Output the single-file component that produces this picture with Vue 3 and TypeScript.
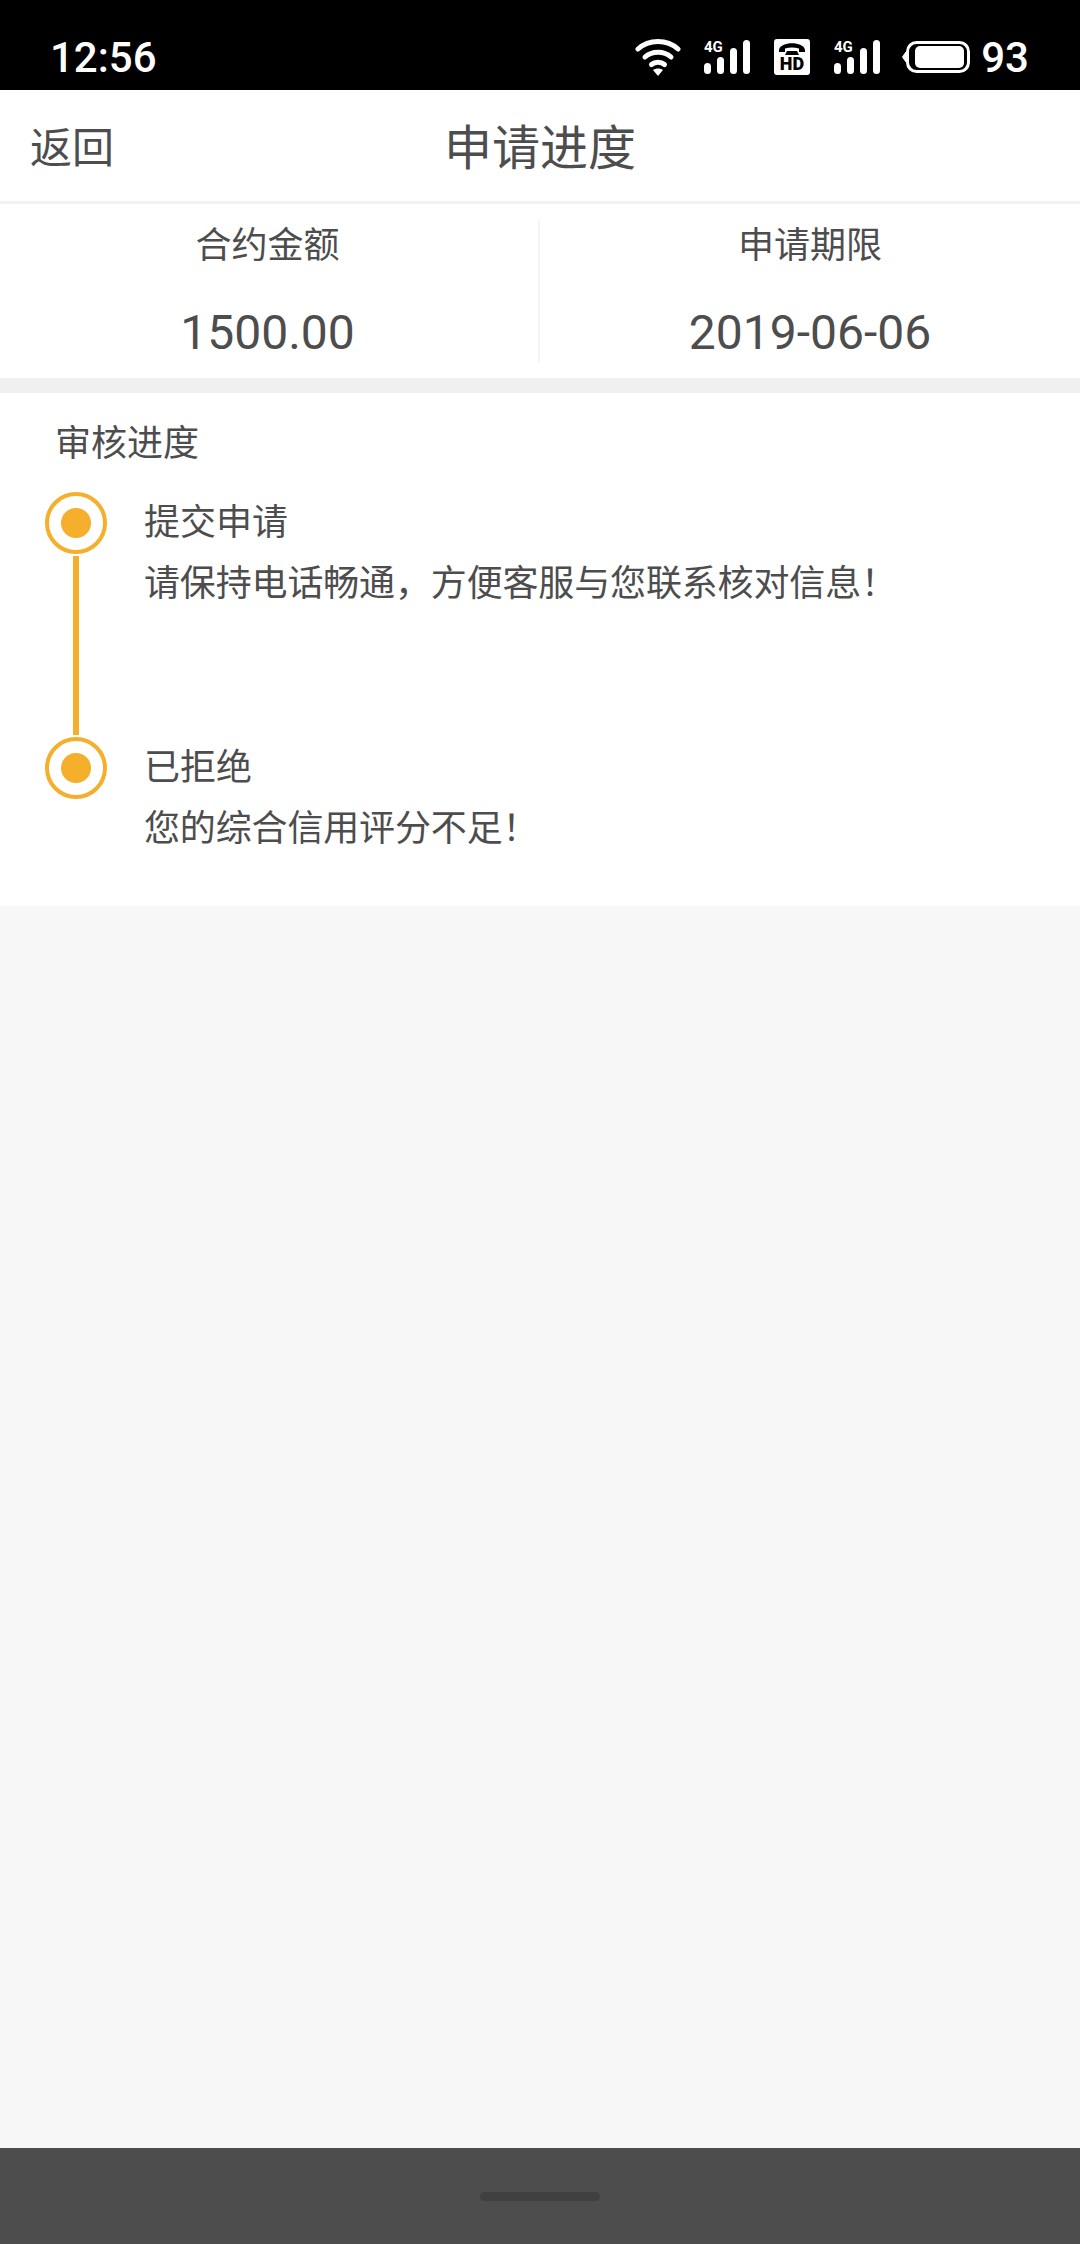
<script setup lang="ts">
interface Step {
  title: string
  desc: string
}

const steps: Step[] = [
  { title: '提交申请', desc: '请保持电话畅通，方便客服与您联系核对信息！' },
  { title: '已拒绝', desc: '您的综合信用评分不足！' }
]
</script>

<template>
  <div class="page">
    <!-- 状态栏 -->
    <div class="status-bar">
      <span class="clock">12:56</span>
      <div class="status-icons">
        <svg class="wifi" width="46" height="38" viewBox="0 0 46 38">
          <path d="M3 11 C14 1 32 1 43 11" fill="none" stroke="#fff" stroke-width="5" stroke-linecap="round" />
          <path d="M10 19 C17 12.500 29 12.500 36 19" fill="none" stroke="#fff" stroke-width="5" stroke-linecap="round" />
          <path d="M16.500 26.500 C20 23.500 26 23.500 29.500 26.500" fill="none" stroke="#fff" stroke-width="5" stroke-linecap="round" />
          <path d="M18 32 C21 30 25 30 28 32 L23 38 Z" fill="#fff" />
        </svg>
        <svg class="signal" width="46" height="37" viewBox="0 -3 46 37">
          <text x="0" y="12" class="net">4G</text>
          <rect x="0" y="23" width="7" height="11" rx="3.500" fill="#fff" />
          <rect x="13" y="17" width="7" height="17" rx="3.500" fill="#fff" />
          <rect x="26" y="8" width="7" height="26" rx="3.500" fill="#fff" />
          <rect x="39" y="0" width="7" height="34" rx="3.500" fill="#fff" />
        </svg>
        <svg class="hd" width="36" height="36" viewBox="0 0 36 36">
          <rect width="36" height="36" rx="3" fill="#fff" />
          <path d="M5 11 C6 2 30 2 31 11 L31 13 L25 13 L25 9.500 C20 8 16 8 11 9.500 L11 13 L5 13 Z" fill="#000" />
          <path d="M13 12 L23 12 L25 16 L11 16 Z" fill="#000" />
          <text x="18" y="31" class="hd-text">HD</text>
        </svg>
        <svg class="signal" width="46" height="37" viewBox="0 -3 46 37">
          <text x="0" y="12" class="net">4G</text>
          <rect x="0" y="23" width="7" height="11" rx="3.500" fill="#fff" />
          <rect x="13" y="17" width="7" height="17" rx="3.500" fill="#fff" />
          <rect x="26" y="8" width="7" height="26" rx="3.500" fill="#fff" />
          <rect x="39" y="0" width="7" height="34" rx="3.500" fill="#fff" />
        </svg>
        <svg class="battery" width="68" height="32" viewBox="0 0 68 32">
          <path d="M0.500 16 L4 11 L4 21 Z" fill="#fff" stroke="#fff" stroke-width="1" stroke-linejoin="round" />
          <rect x="5.500" y="1.500" width="61" height="29" rx="9" fill="none" stroke="#fff" stroke-width="3" />
          <rect x="13" y="5" width="49" height="22" rx="5" fill="#fff" />
        </svg>
        <span class="level">93</span>
      </div>
    </div>

    <!-- 标题栏 -->
    <header class="nav">
      <span class="back">返回</span>
      <span class="title">申请进度</span>
    </header>

    <!-- 合约信息 -->
    <section class="summary">
      <div class="cell">
        <div class="cell-label">合约金额</div>
        <div class="cell-value">1500.00</div>
      </div>
      <div class="cell">
        <div class="cell-label">申请期限</div>
        <div class="cell-value">2019-06-06</div>
      </div>
    </section>

    <!-- 审核进度 -->
    <section class="progress">
      <h2 class="progress-title">审核进度</h2>
      <div v-for="(step, index) in steps" :key="index" class="step">
        <div class="rail">
          <span class="dot"></span>
          <span v-if="index < steps.length - 1" class="line"></span>
        </div>
        <div class="step-body">
          <div class="step-title">{{ step.title }}</div>
          <div class="step-desc">{{ step.desc }}</div>
        </div>
      </div>
    </section>

    <div class="filler"></div>

    <!-- 底部手势条 -->
    <div class="gesture-bar">
      <span class="gesture-pill"></span>
    </div>
  </div>
</template>

<style scoped>
.page {
  display: flex;
  flex-direction: column;
  width: 1080px;
  height: 2244px;
  background: #f7f7f7;
  color: #4d4d4d;
  font-family: Roboto, "Noto Sans CJK SC", sans-serif;
  overflow: hidden;
}

.status-bar {
  display: flex;
  justify-content: space-between;
  align-items: center;
  height: 90px;
  padding: 24px 51px 0 50px;
  box-sizing: border-box;
  background: #000;
  color: #fff;
}

.clock {
  font-size: 42px;
  font-weight: 500;
}

.status-icons {
  display: flex;
  align-items: center;
  gap: 24px;
}

.wifi {
  margin-right: -1px;
}

.signal {
  margin-top: -3px;
}

.net {
  font-family: Roboto, sans-serif;
  font-size: 15px;
  font-weight: 700;
  fill: #fff;
}

.hd-text {
  font-family: Roboto, sans-serif;
  font-size: 18px;
  font-weight: 900;
  fill: #000;
  text-anchor: middle;
}

.battery {
  margin-left: -2px;
}

.level {
  margin-left: -12.5px;
  font-size: 42px;
  font-weight: 500;
}

.nav {
  display: flex;
  align-items: center;
  justify-content: center;
  position: relative;
  height: 111px;
  background: #fff;
  border-bottom: 3px solid #f2f2f2;
}

.back {
  position: absolute;
  left: 30px;
  top: 34px;
  font-size: 42px;
  line-height: 50px;
}

.title {
  position: relative;
  top: 3px;
  font-size: 48px;
  line-height: 60px;
}

.summary {
  display: flex;
  height: 189px;
  padding: 15px 0;
  box-sizing: border-box;
  background: #fff;
  border-bottom: 15px solid #f0f0f0;
}

.cell {
  flex: 0 0 540px;
  box-sizing: border-box;
  text-align: center;
}

.cell:first-child {
  padding-right: 3px;
  border-right: 2px solid #f5f5f5;
}

.cell-label {
  padding-top: 2px;
  font-size: 36px;
  line-height: 50px;
}

.cell-value {
  margin-top: 34px;
  font-size: 48px;
  line-height: 56px;
}

.progress {
  height: 513px;
  padding: 26px 0 0 45px;
  box-sizing: border-box;
  background: #fff;
}

.progress-title {
  margin: 0 0 23px 10px;
  font-size: 36px;
  font-weight: 400;
  line-height: 50px;
}

.step {
  display: flex;
  height: 245px;
}

.rail {
  display: flex;
  flex-direction: column;
  align-items: center;
  width: 62px;
}

.dot {
  flex: none;
  width: 62px;
  height: 62px;
  box-sizing: border-box;
  border: 4.5px solid #f6ae2d;
  border-radius: 50%;
  background: radial-gradient(circle, #f6ae2d 0 14.5px, #fff 15.5px);
}

.line {
  flex: 1;
  width: 6px;
  margin: 2px 0;
  background: #f6ae2d;
}

.step-body {
  margin-left: 37px;
  padding-top: 1px;
}

.step-title,
.step-desc {
  font-size: 36px;
  line-height: 61px;
}

.step-desc {
  letter-spacing: -0.15px;
}

.filler {
  flex: 1;
}

.gesture-bar {
  display: flex;
  align-items: flex-start;
  justify-content: center;
  height: 96px;
  padding-top: 44px;
  box-sizing: border-box;
  background: #4d4d4d;
}

.gesture-pill {
  width: 120px;
  height: 9px;
  border-radius: 5px;
  background: #404040;
}
</style>
